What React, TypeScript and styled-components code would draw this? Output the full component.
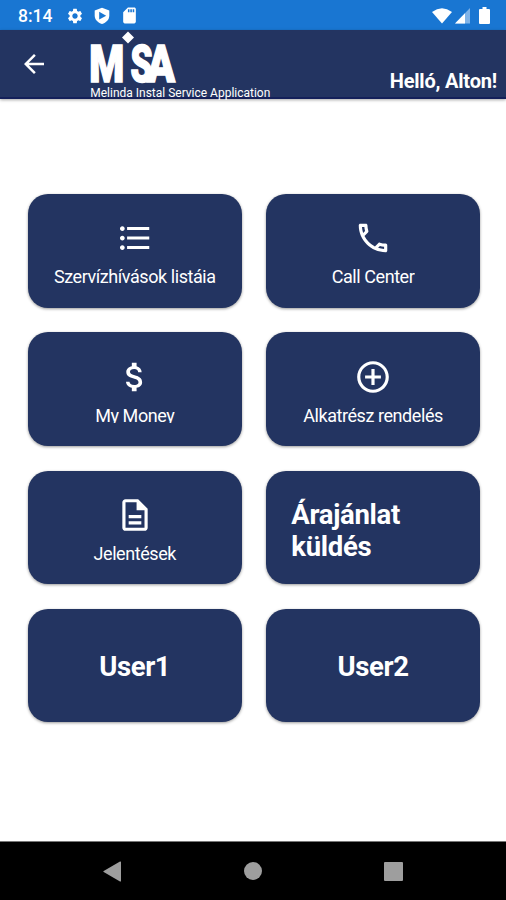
import React from "react";
import styled, { createGlobalStyle } from "styled-components";
import {
  MdArrowBack,
  MdAttachMoney,
  MdControlPoint,
  MdFormatListBulleted,
  MdOutlineCall,
  MdOutlineDescription,
  MdSdCard,
  MdSettings,
} from "react-icons/md";
import type { IconType } from "react-icons";

const GlobalStyle = createGlobalStyle`
  *, *::before, *::after { box-sizing: border-box; }
  body { margin: 0; background: #fff; font-family: Roboto, "Liberation Sans", sans-serif; }
  svg { display: block; overflow: visible; }
  button { font: inherit; color: inherit; border: 0; padding: 0; background: none; }
`;

const Screen = styled.div`
  display: flex;
  flex-direction: column;
  width: 506px;
  height: 900px;
  overflow: hidden;
  background: #fff;
  color: #fff;
`;

const StatusBar = styled.header`
  display: flex;
  align-items: center;
  justify-content: space-between;
  flex: none;
  height: 30px;
  padding: 1px 16px 0 18px;
  background: #1976d2;
`;

const StatusGroup = styled.div<{ $gap: number }>`
  display: flex;
  align-items: center;
  gap: ${(p) => p.$gap}px;
`;

const Clock = styled.span`
  width: 38px;
  font-size: 17.5px;
  font-weight: 500;
  line-height: 28px;
  white-space: nowrap;
`;

const Toolbar = styled.div`
  display: flex;
  flex: none;
  height: 69px;
  padding-left: 19px;
  padding-right: 9px;
  background: #233461;
  border-bottom: 2px solid #14205a;
  box-shadow: 0 1px 3px rgba(0, 0, 0, 0.35);
`;

const BackButton = styled.button`
  display: flex;
  align-items: center;
  width: 70px;
  height: 68px;
`;

const Greeting = styled.div`
  margin: 39px 0 0 auto;
  font-size: 20px;
  font-weight: 700;
  line-height: 24px;
  letter-spacing: -0.2px;
  white-space: nowrap;
`;

const Menu = styled.main`
  display: grid;
  flex: 1;
  grid-template-columns: 213.5px 213.5px;
  grid-auto-rows: 113.5px;
  gap: 24.8px;
  padding: 95px 0 0 28px;
`;

const Card = styled.button<{ $start?: boolean }>`
  display: flex;
  flex-direction: column;
  align-items: ${(p) => (p.$start ? "flex-start" : "center")};
  justify-content: center;
  padding: ${(p) => (p.$start ? "7px 24px 0 25px" : "2px 0 0")};
  border-radius: 20px;
  background: #233461;
  box-shadow: 0 1px 3px rgba(0, 0, 0, 0.4);
  text-align: left;
`;

const CardLabel = styled.span<{ $height: number }>`
  height: ${(p) => p.$height}px;
  margin: 9px 0 ${(p) => 18 - p.$height}px;
  padding: 0 1px;
  overflow: hidden;
  font-size: 18px;
  line-height: 22px;
  letter-spacing: -0.43px;
  white-space: nowrap;
`;

const CardTitle = styled.strong`
  width: 130px;
  font-size: 27.5px;
  font-weight: 700;
  line-height: 32px;
  letter-spacing: -0.3px;
`;

const UserTitle = styled(CardTitle)`
  width: auto;
  margin-top: 1px;
  line-height: 34px;
  letter-spacing: -0.4px;
`;

const NavBar = styled.nav`
  display: flex;
  align-items: center;
  justify-content: space-between;
  flex: none;
  height: 59px;
  padding: 0 103px;
  border-top: 1px solid #777;
  background: #000;
  color: #9e9e9e;
`;

function ShieldIcon() {
  return (
    <svg width="16" height="18" viewBox="0 0 16 18">
      <path fill="#fff" d="M8 0.7 15.3 3.5V8.4c0 4.1-3.1 7.2-7.3 8.6C3.8 15.6.7 12.5.7 8.4V3.5z" />
      <path fill="#1976d2" d="M5.2 4.8 12.2 8.7 5.2 12.6z" />
    </svg>
  );
}

function WifiIcon() {
  return (
    <svg width="20" height="16" viewBox="0 0 20 16">
      <path fill="#fff" d="M0 4Q10-3.4 20 4L10 15.4z" />
    </svg>
  );
}

function SignalIcon() {
  return (
    <svg width="15" height="16" viewBox="0 0 15 16">
      <path fill="#80b3e8" d="M15 0v15.5H0z" />
      <path fill="#fff" d="M10 5.2v10.3H0z" />
    </svg>
  );
}

function BatteryIcon() {
  return (
    <svg width="11" height="17" viewBox="0 0 11 17">
      <path fill="#fff" d="M3.5 0h4v2H10q1 0 1 1v13q0 1-1 1H1q-1 0-1-1V3q0-1 1-1h2.5z" />
    </svg>
  );
}

function Logo() {
  return (
    <svg
      width="184"
      height="67"
      viewBox="89 30 184 67"
      fill="#fff"
      fontFamily='Roboto, "Liberation Sans", sans-serif'
    >
      <path d="M128 31.4 134 37.4 128 43.4 122 37.4z" />
      <g fontWeight="900" fontSize="52" stroke="#fff" strokeWidth="1.6">
        <text x="89.2" y="82.3" textLength="35" lengthAdjust="spacingAndGlyphs">M</text>
        <text x="130.4" y="82.3" textLength="22" lengthAdjust="spacingAndGlyphs">S</text>
        <text x="147" y="82.3" textLength="28" lengthAdjust="spacingAndGlyphs">A</text>
      </g>
      <text
        x="90.3"
        y="97"
        fontSize="13.6"
        textLength="180"
        lengthAdjust="spacingAndGlyphs"
      >
        Melinda Instal Service Application
      </text>
    </svg>
  );
}

const shortcuts: { label: string; icon: IconType; labelHeight: number }[] = [
  { label: "Szervízhívások listája", icon: MdFormatListBulleted, labelHeight: 17 },
  { label: "Call Center", icon: MdOutlineCall, labelHeight: 17 },
  { label: "My Money", icon: MdAttachMoney, labelHeight: 18 },
  { label: "Alkatrész rendelés", icon: MdControlPoint, labelHeight: 18 },
  { label: "Jelentések", icon: MdOutlineDescription, labelHeight: 18 },
];

export default function App() {
  return (
    <Screen>
      <GlobalStyle />
      <StatusBar>
        <StatusGroup $gap={10}>
          <Clock>8:14</Clock>
          <MdSettings size={18} />
          <ShieldIcon />
          <MdSdCard size={19} />
        </StatusGroup>
        <StatusGroup $gap={9}>
          <StatusGroup $gap={3}>
            <WifiIcon />
            <SignalIcon />
          </StatusGroup>
          <BatteryIcon />
        </StatusGroup>
      </StatusBar>
      <Toolbar>
        <BackButton aria-label="Vissza">
          <MdArrowBack size={30} />
        </BackButton>
        <Logo />
        <Greeting>Helló, Alton!</Greeting>
      </Toolbar>
      <Menu>
        {shortcuts.map(({ label, icon: Icon, labelHeight }) => (
          <Card key={label}>
            <Icon size={38} />
            <CardLabel $height={labelHeight}>{label}</CardLabel>
          </Card>
        ))}
        <Card $start>
          <CardTitle>Árajánlat küldés</CardTitle>
        </Card>
        <Card>
          <UserTitle>User1</UserTitle>
        </Card>
        <Card>
          <UserTitle>User2</UserTitle>
        </Card>
      </Menu>
      <NavBar>
        <svg width="18" height="21" viewBox="0 0 18 21">
          <path fill="currentColor" d="M17 .5q1-.4 1 .6v18.8q0 1-1 .6L.7 11q-1-.5 0-1z" />
        </svg>
        <svg width="18" height="18" viewBox="0 0 18 18">
          <circle cx="9" cy="9" r="9" fill="currentColor" />
        </svg>
        <svg width="19" height="19" viewBox="0 0 19 19">
          <rect width="19" height="19" rx="1" fill="currentColor" />
        </svg>
      </NavBar>
    </Screen>
  );
}
